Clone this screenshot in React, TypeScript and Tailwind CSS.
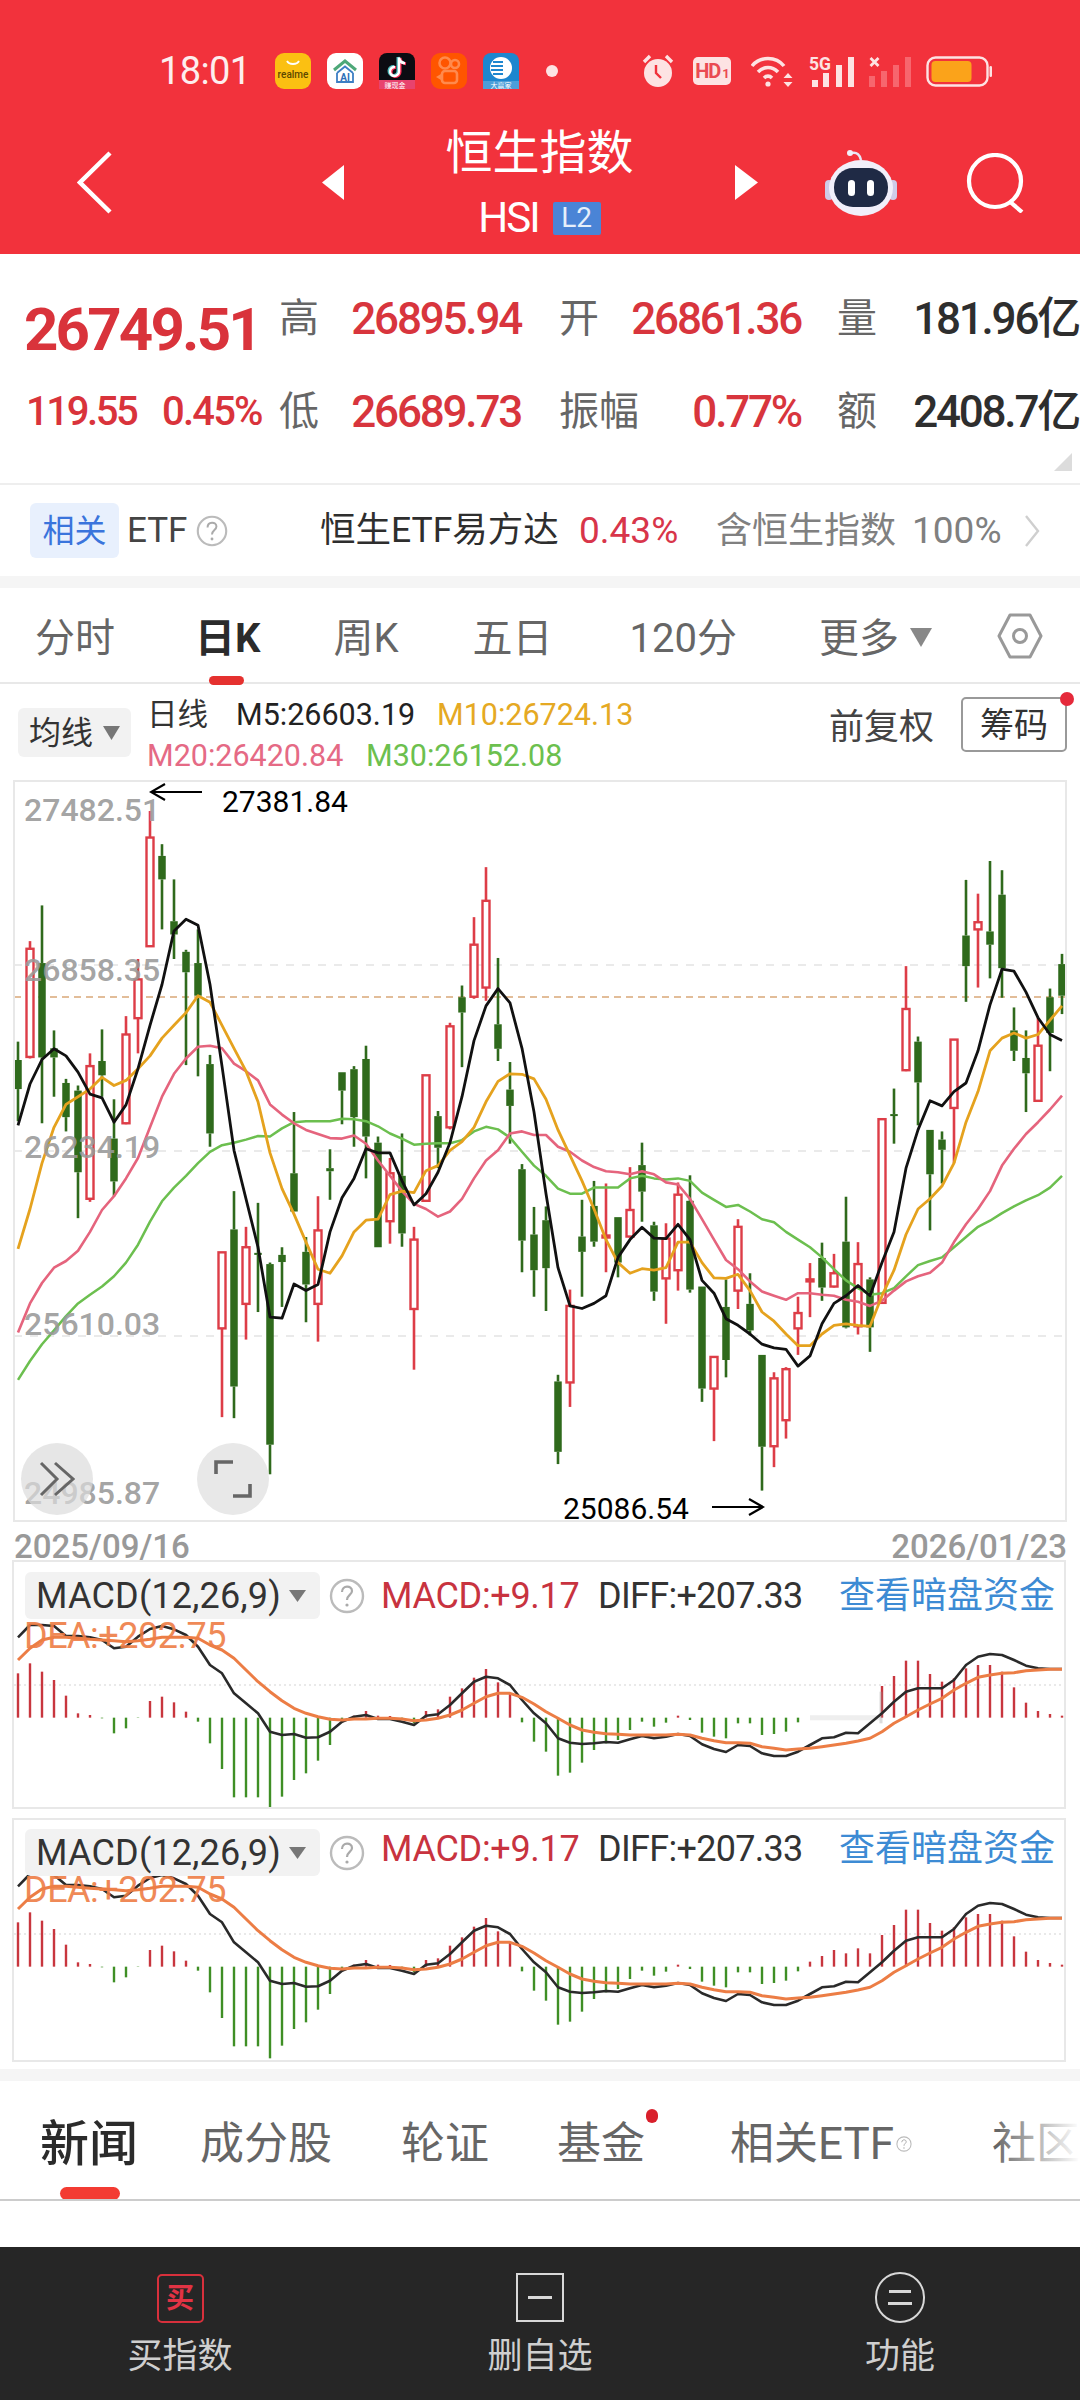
import React from "react";

const cx = (i: number) => 18 + 12 * i;
const ky = (z: number) => 760 + z / 1.96;

// [high, top, bottom, low, isRed]
const C: [number, number, number, number, number][] = [
  [552,588,645,708,0],[355,370,582,585,1],[285,398,583,712,0],[530,565,583,660,0],[625,633,700,728,0],[638,648,808,898,0],[575,600,860,866,1],[528,590,618,660,0],[665,742,826,855,0],[502,538,712,714,1],[390,430,506,575,1],[100,152,365,365,1],[165,188,234,332,0],[234,316,342,390,0],[372,376,416,598,0],[332,398,462,620,0],[578,596,732,758,0],[965,965,1114,1288,1],[845,920,1228,1290,0],[915,955,1066,1136,1],[868,966,970,1082,0],[985,988,1342,1400,0],[955,970,984,1072,0],[690,810,885,885,0],[935,964,1028,1102,0],[855,922,1066,1140,1],[763,800,806,862,0],[612,612,648,714,0],[600,606,700,758,0],[560,586,738,820,0],[738,750,955,955,0],[780,810,904,948,1],[732,815,928,954,0],[915,940,1076,1195,1],[618,618,864,866,1],[688,698,760,800,0],[515,522,720,724,1],[442,465,495,602,0],[308,362,464,468,1],[210,276,446,472,1],[388,518,566,590,0],[592,646,678,752,0],[792,802,942,1004,0],[876,930,1000,1052,0],
  [875,902,996,1080,0],[1205,1218,1356,1380,0],[1038,1070,1220,1268,1],[862,934,964,1052,0],[825,874,944,954,0],[830,932,935,1004,1],[896,896,985,1014,0],[798,882,934,936,1],[750,794,846,905,0],[905,912,1042,1060,0],[908,938,1016,1105,1],[828,852,1000,1040,1],[814,864,1038,1044,0],[1032,1032,1232,1258,0],[1170,1170,1232,1335,1],[1018,1072,1176,1210,0],[900,915,1040,1076,1],[1006,1066,1118,1128,0],[1166,1166,1346,1432,0],[1200,1212,1345,1386,1],[1190,1194,1294,1330,1],[1052,1084,1114,1166,1],[986,1018,1020,1092,1],[946,976,1034,1060,0],[968,1006,1032,1034,1],[856,944,1112,1114,0],[945,988,1110,1126,1],[1014,1018,1112,1160,0],[704,704,1064,1066,1],[644,694,696,752,0],[404,488,608,610,1],[542,552,632,716,0],[725,725,812,922,0],[728,744,764,830,0],[548,548,682,790,1],[235,344,404,474,0],[262,318,332,446,1],[198,336,362,428,0],[216,264,408,466,0],[485,530,570,590,0],[530,584,614,690,0],[505,560,668,670,1],[448,465,535,610,0],[380,400,462,498,0],
];

const MA5 = [716,635,587,566,580,612,655,662,710,676,605,520,440,335,312,324,440,600,765,860,955,1092,1094,1027,1040,1028,925,858,820,762,770,770,825,872,850,808,750,660,550,482,448,476,565,690,850,995,1070,1075,1065,1050,975,940,916,937,938,910,940,1020,1045,1095,1108,1125,1145,1152,1155,1188,1168,1105,1065,1050,1030,1050,985,925,800,725,668,678,650,633,570,480,410,414,455,505,538,550];
const MA10 = [958,880,790,720,675,660,645,622,638,628,605,580,545,520,495,462,475,520,565,610,670,770,840,890,945,998,1006,972,925,902,900,852,845,848,805,795,765,748,720,670,630,615,616,625,665,725,775,825,880,940,985,1006,997,1000,995,945,945,985,1015,1016,1008,1040,1082,1100,1125,1148,1148,1125,1108,1105,1108,1110,1050,1000,930,880,860,835,790,710,650,570,545,535,545,538,510,482];
const MA20 = [1122,1065,1025,995,982,962,925,882,855,820,780,720,660,615,585,562,560,565,595,610,628,675,695,712,725,733,741,742,736,752,785,815,845,870,880,895,885,860,820,785,765,732,728,735,735,758,768,785,798,806,808,812,806,812,828,832,860,900,940,980,998,1022,1042,1050,1058,1045,1045,1048,1050,1058,1062,1070,1060,1040,1022,1012,1005,985,945,910,880,845,795,762,733,710,685,658];
const MA30 = [1215,1178,1145,1118,1090,1065,1048,1032,1012,985,950,905,865,838,815,790,768,755,750,744,737,738,722,710,708,708,708,703,704,708,718,732,742,754,752,751,751,745,728,719,724,740,768,795,815,840,850,850,838,838,838,820,815,820,822,820,825,848,862,876,872,885,900,906,925,940,955,975,998,1020,1035,1048,1045,1035,1012,990,982,975,955,935,915,903,888,875,863,853,838,815];

const BARS = [370,340,365,390,437,490,495,505,550,535,504,453,440,457,485,515,580,657,742,742,742,778,740,690,670,632,585,515,497,483,497,498,510,520,483,478,440,415,383,357,397,430,517,575,605,677,668,638,600,580,570,540,515,530,518,497,510,548,560,565,520,520,555,552,545,517,488,471,453,463,448,463,408,378,332,332,372,395,385,355,345,345,365,412,458,483,492,497];
const DIFF = [262,225,225,228,258,258,262,270,295,290,260,237,228,238,255,290,345,370,430,460,490,545,555,552,563,562,545,515,500,495,507,507,515,525,497,493,465,430,395,380,385,405,450,490,520,565,578,582,580,576,578,568,558,565,560,552,558,583,597,606,585,588,610,618,618,605,585,565,562,548,550,520,490,455,425,415,415,415,390,345,320,312,315,330,347,355,357,357];
const DEA = [330,295,270,262,262,265,268,270,272,275,272,268,262,262,262,265,285,300,325,360,395,425,452,475,490,500,508,510,507,507,505,505,507,512,510,505,495,480,460,440,430,430,442,462,485,505,525,540,547,551,553,555,555,555,555,553,555,565,572,578,578,580,590,595,600,597,595,590,585,580,573,565,545,520,500,480,462,445,420,400,382,375,370,368,362,360,358,358];

const pts = (a: number[], f: (z: number) => number) => a.map((z, i) => `${cx(i)},${f(z).toFixed(1)}`).join(" ");

function KChart() {
  return (
    <svg width="1054" height="742" viewBox="13 780 1054 742" className="block">
      {[965, 1151, 1336].map((y) => (
        <line key={y} x1="14" x2="1066" y1={y} y2={y} stroke="#e3e3e3" strokeWidth="1.5" strokeDasharray="8 8" />
      ))}
      <line x1="14" x2="1066" y1="997" y2="997" stroke="#d9a878" strokeWidth="1.5" strokeDasharray="7 5" />
      {C.map(([h, t, b, l, r], i) => {
        const x = cx(i);
        const col = r ? "#dd3d47" : "#2f6a1c";
        return (
          <g key={i}>
            <line x1={x} x2={x} y1={ky(h)} y2={ky(t)} stroke={col} strokeWidth="2.6" />
            <line x1={x} x2={x} y1={ky(b)} y2={ky(l)} stroke={col} strokeWidth="2.6" />
            {r ? (
              <rect x={x - 3.5} y={ky(t)} width="7" height={Math.max(ky(b) - ky(t), 2)} fill="#fff" stroke={col} strokeWidth="2.4" />
            ) : (
              <rect x={x - 3.75} y={ky(t)} width="7.5" height={Math.max(ky(b) - ky(t), 2)} fill={col} />
            )}
          </g>
        );
      })}
      <polyline points={pts(MA30, ky)} fill="none" stroke="#6cbf4f" strokeWidth="2.5" strokeLinejoin="round" />
      <polyline points={pts(MA20, ky)} fill="none" stroke="#e5647d" strokeWidth="2.6" strokeLinejoin="round" />
      <polyline points={pts(MA10, ky)} fill="none" stroke="#e5a21e" strokeWidth="2.8" strokeLinejoin="round" />
      <polyline points={pts(MA5, ky)} fill="none" stroke="#111" strokeWidth="2.8" strokeLinejoin="round" />
    </svg>
  );
}

function HelpIcon({ size, className = "" }: { size: number; className?: string }) {
  return (
    <svg width={size} height={size} viewBox="0 0 36 36" className={className}>
      <circle cx="18" cy="18" r="16" fill="none" stroke="#bbb" strokeWidth="2.4" />
      <path d="M13 14c0-7 10-7 10-1 0 4-5 4-5 9" fill="none" stroke="#aaa" strokeWidth="2.2" />
      <circle cx="18" cy="27" r="1.6" fill="#aaa" />
    </svg>
  );
}

function MacdPanel({ second }: { second?: boolean }) {
  const off = second ? 249 : 0;
  const top = second ? 1818 : 1560;
  const h = second ? 244 : 249;
  const y = (z: number) => 1550 + z / 3 + off;
  const base = y(503);
  return (
    <div className={second ? "relative mt-[9px] mx-[12px] w-[1054px] h-[244px] outline-2 -outline-offset-2 outline-[#e8e8e8]" : "relative mx-[12px] w-[1054px] h-[249px] outline-2 -outline-offset-2 outline-[#e8e8e8]"}>
      <svg width="1054" height={h} viewBox={`12 ${top} 1054 ${h}`} className="block">
        <line x1="14" x2="1064" y1={y(405)} y2={y(405)} stroke="#e2e2e2" strokeWidth="1.5" strokeDasharray="2 3" />
        {BARS.map((z, i) => {
          if (!second && i >= 66 && i <= 71) return null;
          const up = z < 503;
          return <line key={i} x1={cx(i)} x2={cx(i)} y1={base} y2={y(z)} stroke={up ? "#c8363e" : "#3f8f25"} strokeWidth="2.4" />;
        })}
        {!second && (
          <g opacity="0.35">
            <line x1="810" x2="880" y1={base} y2={base} stroke="#cfcfcf" strokeWidth="5" />
            <line x1="881" x2="881" y1={y(425)} y2={y(520)} stroke="#999" strokeWidth="3" />
          </g>
        )}
        <polyline points={pts(DIFF, y)} fill="none" stroke="#2a2a2a" strokeWidth="2.6" strokeLinejoin="round" />
        <polyline points={pts(DEA, y)} fill="none" stroke="#ec7d45" strokeWidth="3" strokeLinejoin="round" />
      </svg>
      <div className={second ? "absolute left-[13px] top-[11px] flex items-center" : "absolute left-[13px] top-[12px] flex items-center"}>
        <div className="w-[295px] h-[47px] bg-[#f2f2f2] rounded-md flex items-center pl-[11px]">
          <span className="text-[36px] leading-none text-[#333] w-[253px] tracking-[0.2px] whitespace-nowrap">MACD(12,26,9)</span>
          <svg width="17" height="12" viewBox="0 0 17 12"><path d="M0 0h17l-8.5 12z" fill="#777" /></svg>
        </div>
        <HelpIcon size={36} className="ml-[9px]" />
        <span className={second ? "ml-[16px] -mt-[8px] text-[36px] leading-none text-[#c8333f] whitespace-nowrap w-[217px] tracking-[-0.3px]" : "ml-[16px] text-[36px] leading-none text-[#c8333f] whitespace-nowrap w-[217px] tracking-[-0.3px]"}>MACD:+9.17</span>
        <span className={second ? "-mt-[8px] text-[36px] leading-none text-[#333] whitespace-nowrap w-[241px] tracking-[-0.7px]" : "text-[36px] leading-none text-[#333] whitespace-nowrap w-[241px] tracking-[-0.7px]"}>DIFF:+207.33</span>
        <span className={second ? "-mt-[8px] text-[36px] leading-none text-[#3d8bd4] whitespace-nowrap" : "text-[36px] leading-none text-[#3d8bd4] whitespace-nowrap"}>查看暗盘资金</span>
      </div>
      <div className={second ? "absolute left-[12px] top-[54px] text-[36px] leading-none text-[#ee7d45] opacity-90 whitespace-nowrap tracking-[-0.5px]" : "absolute left-[12px] top-[58px] text-[36px] leading-none text-[#ee7d45] opacity-90 whitespace-nowrap tracking-[-0.5px]"}>DEA:+202.75</div>
    </div>
  );
}

function AppIcons() {
  return (
    <div className="flex items-center gap-[16px]">
      <svg width="36" height="36" viewBox="0 0 36 36">
        <rect width="36" height="36" rx="9" fill="#fbc012" />
        <path d="M12 8c2 4 10 4 12 0" fill="none" stroke="#fff" strokeWidth="1.8" />
        <text x="18" y="25" textAnchor="middle" fontSize="10" fontWeight="500" fill="#5e4800" fontFamily="Roboto">realme</text>
      </svg>
      <svg width="36" height="36" viewBox="0 0 36 36">
        <rect width="36" height="36" rx="9" fill="#fff" />
        <path d="M7 17 18 8l11 9" fill="none" stroke="#4da878" strokeWidth="3" />
        <path d="M10 20v9h16v-9" fill="none" stroke="#3d7fc4" strokeWidth="1.8" />
        <path d="M10 20 18 13.500l8 6.500" fill="none" stroke="#3d7fc4" strokeWidth="1.8" />
        <text x="18" y="28" textAnchor="middle" fontSize="10" fontWeight="700" fill="#2f6fb8" fontFamily="Roboto">AI</text>
      </svg>
      <svg width="36" height="36" viewBox="0 0 36 36">
        <rect width="36" height="36" rx="8" fill="#0c0c12" />
        <path d="M21 5v14a4.500 4.500 0 1 1-4-4.500M21 5c.6 3.500 3 5.500 6 5.800" fill="none" stroke="#ff2d55" strokeWidth="3" />
        <path d="M19 4v14a4.500 4.500 0 1 1-4-4.500M19 4c.6 3.500 3 5.500 6 5.800" fill="none" stroke="#5fe6e6" strokeWidth="3" opacity="0.8" />
        <path d="M20 4.500v14a4.500 4.500 0 1 1-4-4.500M20 4.500c.6 3.500 3 5.500 6 5.800" fill="none" stroke="#fff" strokeWidth="2.4" />
        <rect y="27" width="36" height="9" fill="#e8436e" />
        <text x="16" y="34.500" textAnchor="middle" fontSize="7" fill="#fff" fontFamily="'Noto Sans CJK SC'">赚现金</text>
      </svg>
      <svg width="36" height="36" viewBox="0 0 36 36">
        <rect width="36" height="36" rx="9" fill="#ff5500" />
        <circle cx="14" cy="10" r="5.500" fill="none" stroke="#ff8a4d" strokeWidth="2.6" />
        <circle cx="24" cy="11" r="4" fill="none" stroke="#ff8a4d" strokeWidth="2.6" />
        <rect x="11" y="18" width="15" height="12" rx="3" fill="none" stroke="#ff8a4d" strokeWidth="2.6" />
        <path d="M10 21 5 24l5 3z" fill="#ff8a4d" />
      </svg>
      <svg width="36" height="36" viewBox="0 0 36 36">
        <rect width="36" height="36" rx="8" fill="#1d86cf" />
        <circle cx="18" cy="15" r="11" fill="#fff" />
        <path d="M10 9h10M8 13h12M8 17h12M10 21h10" stroke="#1d86cf" strokeWidth="2" />
        <rect y="28" width="36" height="8" fill="#4c9ed9" />
        <text x="18" y="35" textAnchor="middle" fontSize="7" fill="#fff" fontFamily="'Noto Sans CJK SC'">大赢家</text>
      </svg>
    </div>
  );
}

function StatusRight() {
  const c = "#fde3e3";
  const f = "#f7666e";
  return (
    <div className="flex items-center ml-[84px]">
      <svg width="32" height="34" viewBox="0 0 32 34">
        <circle cx="16" cy="19" r="14" fill={c} />
        <path d="M14 11v8l5 5" fill="none" stroke="#f0323c" strokeWidth="2.4" />
        <path d="M2 8 8 2M30 8l-6-6" stroke={c} strokeWidth="3.4" />
      </svg>
      <div className="ml-[19px] w-[38px] h-[28px] rounded-[5px] bg-[#fde3e3] flex items-center justify-center text-[#ea4a52] text-[20px] leading-none font-bold tracking-[-1px]">HD<span className="text-[13px] ml-[2px] mt-[5px]">1</span></div>
      <svg width="44" height="32" viewBox="0 0 44 32" className="ml-[20px]">
        <path d="M2 11C10 1 26 1 34 11M8 17c6-6 14-6 20 0M14 23c2.500-2.500 5.500-2.500 8 0" fill="none" stroke={c} strokeWidth="3.6" transform="translate(-1 0)" />
        <circle cx="17" cy="29" r="2.600" fill={c} />
        <path d="M37 18l4.500 5h-9zM37 32l4.500-5h-9z" fill={c} />
      </svg>
      <svg width="45" height="32" viewBox="0 0 45 32" className="ml-[14px] overflow-visible">
        <text x="0" y="15" fontSize="18" fontWeight="700" fill={c} fontFamily="Roboto" textLength="22" lengthAdjust="spacingAndGlyphs">5G</text>
        <rect x="3" y="25" width="6" height="7" fill={c} />
        <rect x="14" y="18" width="6" height="14" fill={c} />
        <rect x="27" y="10" width="6" height="22" fill={c} />
        <rect x="39" y="2" width="6" height="30" fill={c} />
      </svg>
      <svg width="43" height="32" viewBox="0 0 43 32" className="ml-[15px]">
        <path d="M1.500 3l8 8M9.500 3l-8 8" stroke={c} strokeWidth="2.800" />
        <rect x="0" y="21" width="6" height="11" fill={f} />
        <rect x="12" y="16" width="6" height="16" fill={f} />
        <rect x="24" y="10" width="6" height="22" fill={f} />
        <rect x="36" y="2" width="6" height="30" fill={f} />
      </svg>
      <svg width="66" height="31" viewBox="0 0 66 31" className="ml-[14px]">
        <rect x="1.500" y="1.500" width="60" height="28" rx="8" fill="none" stroke={c} strokeWidth="2.400" />
        <rect x="5.500" y="5" width="40" height="21" rx="4" fill="#fba31a" />
        <rect x="63.500" y="10" width="2.500" height="11" rx="1.200" fill={c} />
      </svg>
    </div>
  );
}

function Quote({ label, value, color = "text-[#d8353d]", ml = "" }: { label: string; value: string; color?: string; ml?: string }) {
  return (
    <div className={`flex justify-between items-center h-[44px] w-[240px] ${ml}`}>
      <span className="-ml-[2px] text-[40px] leading-none text-[#666] whitespace-nowrap">{label}</span>
      <span className={`text-[44px] leading-none font-medium whitespace-nowrap tracking-[-2.2px] ${color}`}>{value}</span>
    </div>
  );
}

export default function App() {
  return (
    <div className="w-[1080px] h-[2400px] bg-white overflow-hidden font-[family-name:Roboto,'Noto_Sans_CJK_SC',sans-serif]">
      {/* Header */}
      <header className="h-[254px] bg-[#f2323c] pt-[53px]">
        <div className="flex items-center h-[36px] pl-[159px]">
          <span className="text-[38px] leading-none text-[#fdeeee] w-[89px] whitespace-nowrap tracking-[-0.6px]">18:01</span>
          <div className="ml-[27px]"><AppIcons /></div>
          <span className="ml-[27px] w-[12px] h-[12px] rounded-full bg-[#fde3e3]" />
          <StatusRight />
        </div>
        <div className="flex items-center mt-[41px] h-[105px] pl-[77px]">
          <svg width="35" height="63" viewBox="0 0 35 63"><path d="M33 2 3 31.500 33 61" fill="none" stroke="#fff" strokeWidth="4.500" /></svg>
          <svg width="22" height="35" viewBox="0 0 22 35" className="ml-[210px]"><path d="M22 0v35L0 17.500z" fill="#fff" /></svg>
          <div className="w-[391px] flex flex-col items-center">
            <div className="text-[47px] leading-[46px] h-[46px] text-white whitespace-nowrap">恒生指数</div>
            <div className="mt-[25px] h-[34px] flex items-center">
              <span className="text-[42px] leading-none text-white tracking-[-2px]">HSI</span>
              <span className="ml-[14px] w-[48px] h-[33px] bg-[#4a84d6] rounded-[2px] flex items-center justify-center text-[28px] leading-none text-[#e6effb]">L2</span>
            </div>
          </div>
          <svg width="23" height="35" viewBox="0 0 23 35"><path d="M0 0v35l23-17.500z" fill="#fff" /></svg>
          <svg width="72" height="66" viewBox="0 0 72 66" className="ml-[67px]">
            <path d="M27 3c5-1 8 2 9 7" fill="none" stroke="#e8e6f5" strokeWidth="2.400" />
            <circle cx="25" cy="3" r="3" fill="#f2f0fa" />
            <rect x="0" y="30" width="8" height="20" rx="4" fill="#cfcbe8" />
            <rect x="64" y="30" width="8" height="20" rx="4" fill="#cfcbe8" />
            <ellipse cx="36" cy="38" rx="32" ry="28" fill="#f1effa" />
            <rect x="9" y="18" width="54" height="39" rx="19" fill="#1f2a45" />
            <rect x="23" y="30" width="7" height="16" rx="3.500" fill="#fff" />
            <rect x="42" y="30" width="7" height="16" rx="3.500" fill="#fff" />
          </svg>
          <svg width="59" height="60" viewBox="0 0 59 60" className="ml-[69px]">
            <circle cx="29" cy="28" r="26" fill="none" stroke="#fff" strokeWidth="4.200" />
            <path d="M43 48 56 59" stroke="#fff" strokeWidth="4.200" />
          </svg>
        </div>
      </header>

      {/* Quote */}
      <section className="relative h-[231px] pt-[43px] border-b-2 border-[#eeeeee]">
        <div className="flex h-[44px]">
          <div className="w-[281px] pl-[24px] pt-[3px] text-[60px] leading-none font-bold text-[#d9333b] tracking-[-2.8px] whitespace-nowrap">26749.51</div>
          <Quote label="高" value="26895.94" />
          <Quote label="开" value="26861.36" ml="ml-[40px]" />
          <Quote label="量" value="181.96亿" color="text-[#2e2e2e]" ml="ml-[38px]" />
        </div>
        <div className="flex h-[44px] mt-[49px]">
          <div className="w-[281px] pl-[26px] flex items-center text-[40px] leading-none font-medium text-[#d9333b] whitespace-nowrap">
            <span className="w-[136px] tracking-[-2.4px]">119.55</span><span className="tracking-[-1.8px]">0.45%</span>
          </div>
          <Quote label="低" value="26689.73" />
          <Quote label="振幅" value="0.77%" ml="ml-[40px]" />
          <Quote label="额" value="2408.7亿" color="text-[#2e2e2e]" ml="ml-[38px]" />
        </div>
        <svg width="18" height="18" viewBox="0 0 18 18" className="absolute right-[8px] bottom-[12px]"><path d="M18 0v18H0z" fill="#dcdcdc" /></svg>
      </section>

      {/* ETF row */}
      <section className="h-[91px] flex items-center pl-[30px]">
        <div className="w-[89px] h-[55px] rounded-[6px] bg-[#e8f0fd] flex items-center justify-center text-[32px] leading-none text-[#3a74dc]">相关</div>
        <span className="ml-[8px] w-[69px] text-[35px] leading-none text-[#444]">ETF</span>
        <HelpIcon size={32} />
        <span className="ml-[92px] w-[259px] text-[35.500px] leading-none text-[#2e2e2e] whitespace-nowrap">恒生ETF易方达</span>
        <span className="w-[137px] text-[37px] leading-none text-[#d8354a]">0.43%</span>
        <span className="w-[196px] text-[36px] leading-none text-[#808080] whitespace-nowrap">含恒生指数</span>
        <span className="w-[112px] text-[37px] leading-none text-[#808080]">100%</span>
        <svg width="16" height="32" viewBox="0 0 16 32"><path d="M2 1l12 15L2 31" fill="none" stroke="#cfcfcf" strokeWidth="2.400" /></svg>
      </section>
      <div className="h-[12px] bg-[#f5f5f5]" />

      {/* Period tabs */}
      <nav className="relative h-[96px] flex items-center pl-[35px] pt-[8px] border-b-2 border-[#e8e8e8] text-[40px] leading-none text-[#666] whitespace-nowrap">
        <span>分时</span>
        <span className="relative ml-[80px] font-bold text-[#2b2b2b]">日K
          <span className="absolute left-[14px] top-[57px] w-[35px] h-[9px] rounded-full bg-[#e5312f]" />
        </span>
        <span className="ml-[73px]">周K</span>
        <span className="ml-[74px]">五日</span>
        <span className="ml-[77px]">120分</span>
        <span className="ml-[82px] flex items-center">更多
          <svg width="22" height="19" viewBox="0 0 22 19" className="ml-[11px] -mt-[4px]"><path d="M0 0h22L11 19z" fill="#888" /></svg>
        </span>
        <svg width="46" height="46" viewBox="0 0 46 46" className="absolute left-[997px] top-[25px]">
          <path d="M13 2h20l11 21-11 21H13L2 23z" fill="none" stroke="#999" strokeWidth="3" strokeLinejoin="round" />
          <circle cx="23" cy="23" r="6.500" fill="none" stroke="#999" strokeWidth="3" />
        </svg>
      </nav>

      {/* Legend */}
      <section className="relative h-[96px] flex">
        <div className="mt-[24px] ml-[18px] w-[113px] h-[49px] bg-[#f2f2f2] rounded-md flex items-center pl-[11px]">
          <span className="text-[32px] leading-none text-[#333] w-[74px] whitespace-nowrap">均线</span>
          <svg width="17" height="14" viewBox="0 0 17 14"><path d="M0 0h17L8.500 14z" fill="#777" /></svg>
        </div>
        <div className="ml-[16px] text-[30.500px] leading-none whitespace-nowrap">
          <div className="flex items-center h-[40px] mt-[11px]">
            <span className="w-[89px] text-[#333]">日线</span>
            <span className="w-[201px] text-[#222]">M5:26603.19</span>
            <span className="text-[#e5a923]">M10:26724.13</span>
          </div>
          <div className="flex items-center h-[40px] mt-[1px]">
            <span className="w-[219px] text-[#e56a85]">M20:26420.84</span>
            <span className="text-[#6cc04e]">M30:26152.08</span>
          </div>
        </div>
        <span className="absolute left-[829px] top-[26px] text-[35px] leading-none text-[#444] whitespace-nowrap">前复权</span>
        <div className="absolute left-[961px] top-[13px] w-[106px] h-[55px] border-2 border-[#999] rounded-[5px] flex items-center justify-center text-[34px] leading-none text-[#333]">筹码</div>
        <span className="absolute left-[1060px] top-[8px] w-[14px] h-[14px] rounded-full bg-[#e5293a]" />
      </section>

      {/* K chart */}
      <section className="relative ml-[13px] w-[1054px] h-[742px] outline-2 -outline-offset-2 outline-[#e8e8e8]">
        <KChart />
        <span className="absolute left-[11px] top-[14px] text-[32px] leading-none font-medium text-[#999]/90">27482.51</span>
        <span className="absolute left-[11px] top-[174px] text-[32px] leading-none font-medium text-[#999]/90">26858.35</span>
        <span className="absolute left-[11px] top-[351px] text-[32px] leading-none font-medium text-[#999]/90">26234.19</span>
        <span className="absolute left-[11px] top-[528px] text-[32px] leading-none font-medium text-[#999]/90">25610.03</span>
        <span className="absolute left-[11px] top-[697px] text-[32px] leading-none font-medium text-[#999]/90">24985.87</span>
        <span className="absolute left-[209px] top-[7px] text-[30px] leading-none text-black">27381.84</span>
        <svg width="54" height="24" viewBox="0 0 54 24" className="absolute left-[136px] top-0">
          <path d="M53 12H2M16 4 2 12l14 8" fill="none" stroke="#000" strokeWidth="2.200" />
        </svg>
        <span className="absolute left-[550px] top-[714px] text-[30px] leading-none text-black">25086.54</span>
        <svg width="54" height="24" viewBox="0 0 54 24" className="absolute left-[698px] top-[715px]">
          <path d="M1 12h51M38 4l14 8-14 8" fill="none" stroke="#000" strokeWidth="2.200" />
        </svg>
        <div className="absolute left-[8px] top-[663px] w-[72px] h-[72px] rounded-full bg-[#dcdcdc]/70 flex items-center justify-center">
          <svg width="36" height="36" viewBox="0 0 36 36"><path d="M2 2l16 16L2 34M16 2l18 16-18 16" fill="none" stroke="#666" strokeWidth="3" /></svg>
        </div>
        <div className="absolute left-[184px] top-[663px] w-[72px] h-[72px] rounded-full bg-[#e8e8e8] flex items-center justify-center">
          <svg width="38" height="38" viewBox="0 0 38 38"><path d="M2 14V2h17M36 24v12H19" fill="none" stroke="#666" strokeWidth="3.600" /></svg>
        </div>
      </section>

      {/* Dates */}
      <div className="h-[38px] flex justify-between items-center pl-[14px] pr-[13px] pt-[10px] text-[33px] leading-none font-medium text-[#999]">
        <span>2025/09/16</span>
        <span>2026/01/23</span>
      </div>

      <MacdPanel />
      <MacdPanel second />

      <div className="h-[7px]" />
      <div className="h-[12px] bg-[#f5f5f5]" />

      {/* News tabs */}
      <nav className="relative h-[120px] pt-[8px] border-b-2 border-[#cccccc] flex items-center pl-[40px] text-[44px] leading-none text-[#666] whitespace-nowrap overflow-hidden">
        <span className="relative text-[49px] font-medium text-[#2b2b2b]">新闻
          <span className="absolute left-[20px] top-[67px] w-[60px] h-[13px] rounded-full bg-[#f33b32]" />
        </span>
        <span className="ml-[62px]">成分股</span>
        <span className="ml-[69px]">轮证</span>
        <span className="relative ml-[68px]">基金
          <span className="absolute -right-[13px] -top-[13px] w-[12px] h-[14px] rounded-full bg-[#d9202c]" />
        </span>
        <span className="ml-[85px]">相关ETF</span>
        <HelpIcon size={30} className="ml-[2px]" />
        <span className="ml-[80px]">社区</span>
        <div className="absolute right-0 top-0 bottom-0 w-[80px] bg-gradient-to-r from-white/10 to-white" />
      </nav>
      <div className="h-[46px]" />

      {/* Bottom bar */}
      <footer className="h-[153px] bg-[#262626] flex text-[35px] leading-none text-[#cfcfcf] whitespace-nowrap">
        <div className="w-[360px] flex flex-col items-center pt-[27px]">
          <div className="w-[47px] h-[49px] rounded-[5px] border-2 border-[#d8303c] flex items-center justify-center text-[28px] font-bold text-[#e23344]">买</div>
          <span className="mt-[16px]">买指数</span>
        </div>
        <div className="w-[360px] flex flex-col items-center pt-[26px]">
          <div className="w-[48px] h-[49px] border-2 border-[#d8d8d8] flex items-center justify-center">
            <span className="w-[24px] h-[3px] bg-[#d8d8d8]" />
          </div>
          <span className="mt-[17px]">删自选</span>
        </div>
        <div className="w-[360px] flex flex-col items-center pt-[25px]">
          <div className="w-[50px] h-[51px] rounded-full border-2 border-[#d8d8d8] flex flex-col items-center justify-center gap-[9px]">
            <span className="w-[22px] h-[3px] bg-[#d8d8d8]" />
            <span className="w-[24px] h-[3px] bg-[#d8d8d8]" />
          </div>
          <span className="mt-[16px]">功能</span>
        </div>
      </footer>
    </div>
  );
}
